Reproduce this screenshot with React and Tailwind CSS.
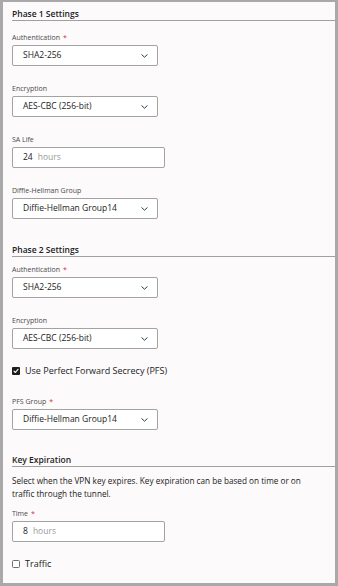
import React from "react";

const Chevron = () => (
  <svg width="7" height="4" viewBox="0 0 7 4" fill="none" className="shrink-0">
    <path d="M0.8 0.7 L3.5 3.2 L6.2 0.7" stroke="#1d3a5e" strokeWidth="1" strokeLinecap="round" strokeLinejoin="round" />
  </svg>
);

const Label = ({ children, required, className = "" }) => (
  <div className={`text-[7px] leading-[10px] mb-[2px] text-[#4a4a4a] ${className}`}>
    {children}
    {required && <span className="text-[#d0312d] ml-[3px]">*</span>}
  </div>
);

const Select = ({ value }) => (
  <div className="w-[146px] h-[21px] flex items-center justify-between pl-[10px] pr-[9px] bg-white border border-[#a3a3a3] rounded-[2px] text-[8.5px] text-[#222]">
    <span>{value}</span>
    <Chevron />
  </div>
);

const Hours = ({ value }) => (
  <div className="w-[153px] h-[21px] flex items-center gap-[5px] pl-[10px] bg-white border border-[#a3a3a3] rounded-[2px] text-[8.5px]">
    <span className="text-[#222]">{value}</span>
    <span className="text-[#9a9a9a]">hours</span>
  </div>
);

const Heading = ({ children, className = "" }) => (
  <div className={`border-b border-[#a0a0a0] ${className}`}>
    <div className="text-[8.5px] leading-[12px] font-semibold text-[#222]">{children}</div>
  </div>
);

const Check = ({ checked, children, className = "" }) => (
  <div className={`flex items-center gap-[5px] h-[12px] ${className}`}>
    {checked ? (
      <div className="w-[8px] h-[8px] bg-[#1c1c1c] rounded-[1px] flex items-center justify-center">
        <svg width="6" height="6" viewBox="0 0 6 6" fill="none">
          <path d="M1 3.1 L2.4 4.5 L5 1.3" stroke="#fff" strokeWidth="1.1" strokeLinecap="round" strokeLinejoin="round" />
        </svg>
      </div>
    ) : (
      <div className="w-[8px] h-[8px] bg-white border border-[#6f6f6f] rounded-[1.5px]" />
    )}
    <span className="text-[9px] text-[#222]">{children}</span>
  </div>
);

export default function App() {
  return (
    <div className="w-[338px] h-[586px] bg-[#fcfafb] border-l-[3px] border-r-[3px] border-t-2 border-b-[3px] border-[#a9a9a9] overflow-hidden font-['Open_Sans',sans-serif]">
      <div className="pl-[9px]">
        <Heading className="pt-[6px]">Phase 1 Settings</Heading>

        <Label required className="mt-[12px]">Authentication</Label>
        <Select value="SHA2-256" />

        <Label className="mt-[18px]">Encryption</Label>
        <Select value="AES-CBC (256-bit)" />

        <Label className="mt-[18px]">SA Life</Label>
        <Hours value="24" />

        <Label className="mt-[18px]">Diffie-Hellman Group</Label>
        <Select value="Diffie-Hellman Group14" />

        <Heading className="mt-[25px]">Phase 2 Settings</Heading>

        <Label required className="mt-[8px]">Authentication</Label>
        <Select value="SHA2-256" />

        <Label className="mt-[18px]">Encryption</Label>
        <Select value="AES-CBC (256-bit)" />

        <Check checked className="mt-[16px]">Use Perfect Forward Secrecy (PFS)</Check>

        <Label required className="mt-[20px]">PFS Group</Label>
        <Select value="Diffie-Hellman Group14" />

        <Heading className="mt-[24px]">Key Expiration</Heading>

        <p className="mt-[7px] pr-[26px] text-[8.2px] leading-[13px] text-[#222]">
          Select when the VPN key expires. Key expiration can be based on time or on traffic through the tunnel.
        </p>

        <Label required className="mt-[9px]">Time</Label>
        <Hours value="8" />

        <Check className="mt-[16px]">Traffic</Check>
      </div>
    </div>
  );
}
